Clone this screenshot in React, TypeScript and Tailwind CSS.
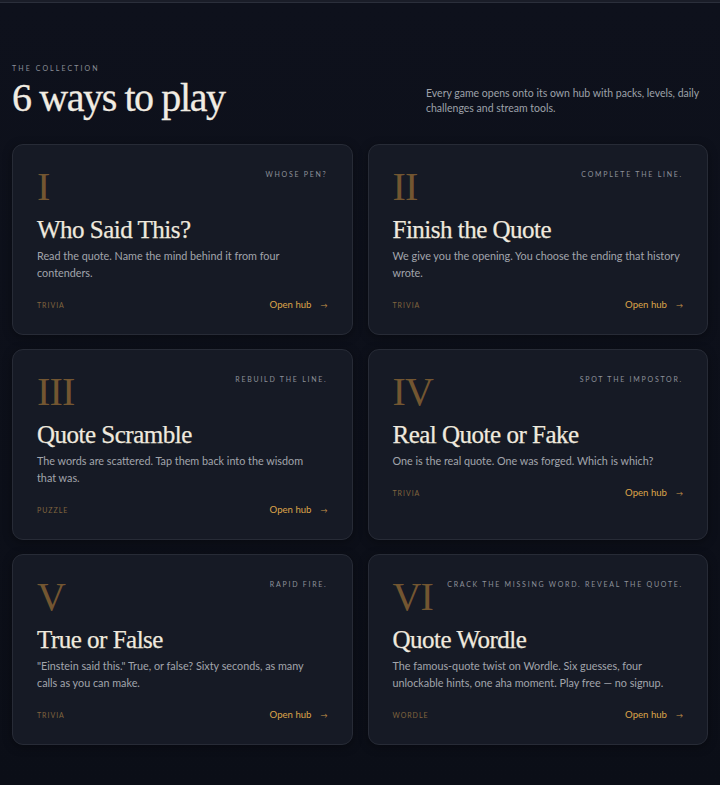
const games = [
  {
    num: "I",
    tag: "WHOSE PEN?",
    title: "Who Said This?",
    desc: "Read the quote. Name the mind behind it from four\ncontenders.",
    kind: "TRIVIA",
  },
  {
    num: "II",
    tag: "COMPLETE THE LINE.",
    title: "Finish the Quote",
    desc: "We give you the opening. You choose the ending that history\nwrote.",
    kind: "TRIVIA",
  },
  {
    num: "III",
    tag: "REBUILD THE LINE.",
    title: "Quote Scramble",
    desc: "The words are scattered. Tap them back into the wisdom\nthat was.",
    kind: "PUZZLE",
  },
  {
    num: "IV",
    tag: "SPOT THE IMPOSTOR.",
    title: "Real Quote or Fake",
    desc: "One is the real quote. One was forged. Which is which?",
    kind: "TRIVIA",
  },
  {
    num: "V",
    tag: "RAPID FIRE.",
    title: "True or False",
    desc: "\"Einstein said this.\" True, or false? Sixty seconds, as many\ncalls as you can make.",
    kind: "TRIVIA",
  },
  {
    num: "VI",
    tag: "CRACK THE MISSING WORD. REVEAL THE QUOTE.",
    title: "Quote Wordle",
    desc: "The famous-quote twist on Wordle. Six guesses, four\nunlockable hints, one aha moment. Play free — no signup.",
    kind: "WORDLE",
  },
];

const serif = "font-['Liberation_Serif','DejaVu_Serif',serif]";

const GameCard = ({ game }: { game: (typeof games)[number] }) => {
  return (
    <div className="rounded-[11px] border border-[#272b36] bg-[#161a25] px-6 pt-[22px] pb-[22px] shadow-[0_2px_10px_rgba(0,0,0,0.35)]">
      <div className="flex items-start justify-between">
        <span className={`${serif} text-[40px] leading-none tracking-[-0.02em] text-[#735631]`}>
          {game.num}
        </span>
        <span className="mt-[1px] text-[7px] leading-[12px] tracking-[0.25em] text-[#8d919a]">
          {game.tag}
        </span>
      </div>
      <h3 className={`${serif} mt-2 text-[25px] leading-[30px] tracking-[-0.02em] text-[#efe9de] [-webkit-text-stroke:0.25px_#efe9de]`}>
        {game.title}
      </h3>
      <p className="mt-[2px] whitespace-pre-line text-[10.8px] leading-[17px] text-[#a2a5ac]">{game.desc}</p>
      <div className="mt-[17px] flex h-[14px] items-center justify-between">
        <span className="text-[7px] tracking-[0.14em] text-[#80653f]">{game.kind}</span>
        <span className="flex items-center gap-[9px] text-[9.6px] text-[#dca449]">
          Open hub <span className="text-[7px] text-[#c9954a]">→</span>
        </span>
      </div>
    </div>
  );
};

export default function App() {
  return (
    <div className="min-h-[785px] bg-gradient-to-b from-[#0e111c] to-[#0b0e17] font-['Lato','Inter',sans-serif]">
      <div className="h-[3px] border-b border-[#2b2f3b] bg-[#1a1d28]" />
      <div className="px-3 pt-[60px]">
        <div className="flex items-end justify-between">
          <div>
            <p className="text-[7px] leading-[10px] tracking-[0.3em] text-[#8a8e98]">THE COLLECTION</p>
            <h2 className={`${serif} mt-[5px] text-[40px] leading-none tracking-[-0.035em] text-[#f1ece2] [-webkit-text-stroke:0.3px_#f1ece2]`}>
              6 ways to play
            </h2>
          </div>
          <p className="mb-[2px] w-[282px] text-[10.5px] leading-[15px] text-[#9da1a9]">
            Every game opens onto its own hub with packs, levels, daily challenges and stream tools.
          </p>
        </div>
        <div className="mt-[26px] grid grid-cols-2 gap-x-[15px] gap-y-[14px]">
          {games.map((g) => (
            <GameCard key={g.num} game={g} />
          ))}
        </div>
      </div>
    </div>
  );
}
